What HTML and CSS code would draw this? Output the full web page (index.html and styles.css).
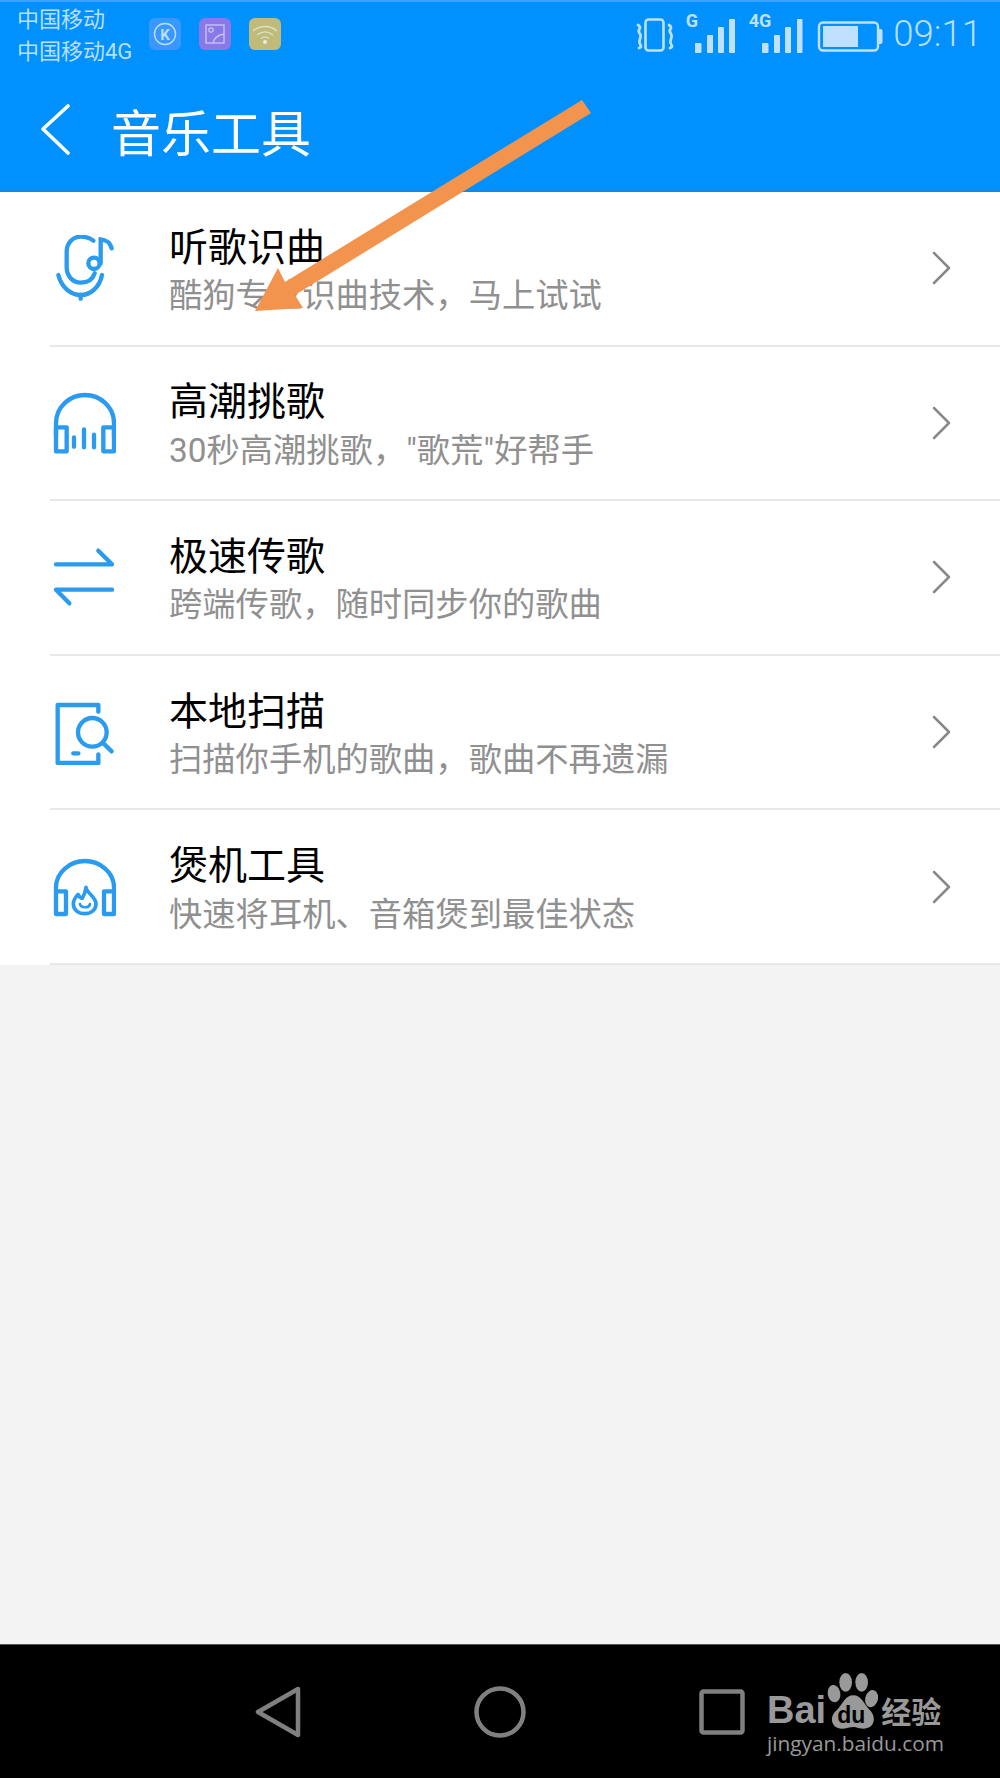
FILE: index.html
```html
<!DOCTYPE html>
<html lang="zh-CN">
<head>
  <meta charset="UTF-8">
  <title>音乐工具</title>
  <link rel="stylesheet" href="styles.css">
</head>
<body>

  <div class="phone">
    <div class="header">
      <div class="statusbar">
        <div class="carrier">
          <div>中国移动</div>
          <div>中国移动4G</div>
        </div>
        <div class="notify">
          <svg class="notify-icon" viewBox="0 0 32 32"><rect width="32" height="32" rx="6" fill="#3a97ff"/><circle cx="16" cy="16" r="10.5" fill="none" stroke="#b9dfff" stroke-width="1.4"/><text x="16" y="21.5" text-anchor="middle" class="k">K</text></svg>
          <svg class="notify-icon" viewBox="0 0 32 32"><rect width="32" height="32" rx="6" fill="#8878e8"/><rect x="7" y="7" width="18" height="18" fill="none" stroke="#c8c8f5" stroke-width="1.3"/><circle cx="12" cy="12" r="2.2" fill="none" stroke="#c8c8f5" stroke-width="1.2"/><path d="M14 25c1-5 5-8 11-9" fill="none" stroke="#c8c8f5" stroke-width="1.3"/></svg>
          <svg class="notify-icon" viewBox="0 0 32 32"><rect width="32" height="32" rx="6" fill="#c0bb78"/><g fill="none" stroke="#d6e4c8" stroke-width="1.3"><path d="M4 13c7-6 17-6 24 0"/><path d="M8 17c5-4 11-4 16 0"/><path d="M12 20.5c2.500-2 5.500-2 8 0"/></g><circle cx="16" cy="24" r="2" fill="#e6efe0"/></svg>
        </div>
        <div class="status-right">
          <svg class="status-icons" width="248" height="54" viewBox="0 0 248 54">
            <g fill="none" stroke="#bfe1ff" stroke-linecap="round">
              <rect x="9.500" y="17.500" width="18" height="31" rx="3" stroke-width="2.600"/>
              <path d="M2 23q3 2 1.500 4t0 4 1 4-1 4 1 4 -1.500 3" stroke-width="2.800"/>
              <path d="M33 23q3 2 1.500 4t0 4 1 4-1 4 1 4 -1.500 3" stroke-width="2.800"/>
              <rect x="183" y="20.500" width="59" height="28" rx="4" stroke-width="2.400"/>
            </g>
            <g fill="#bfe1ff">
              <rect x="187" y="24" width="35" height="21"/>
              <path d="M243 27h1.500q2 0 2 2v11q0 2-2 2H243z"/>
              <text x="56" y="25" class="net" text-anchor="middle">G</text>
              <rect x="59" y="41" width="6.500" height="10" rx="1"/>
              <rect x="71" y="33" width="6" height="18" rx="1"/>
              <rect x="82" y="25" width="6" height="26" rx="1"/>
              <rect x="93" y="17" width="6" height="34" rx="1"/>
              <text x="124" y="25" class="net" text-anchor="middle">4G</text>
              <rect x="126" y="41" width="6.500" height="10" rx="1"/>
              <rect x="138" y="33" width="6" height="18" rx="1"/>
              <rect x="149" y="25" width="6" height="26" rx="1"/>
              <rect x="161" y="17" width="5.500" height="34" rx="1"/>
            </g>
          </svg>
          <span class="clock">09:11</span>
        </div>
      </div>
      <div class="titlebar">
        <svg class="back" width="30" height="52" viewBox="0 0 30 52"><path d="M27 2 2 25l25 24" fill="none" stroke="#fff" stroke-width="3.600" stroke-linecap="round" stroke-linejoin="round"/></svg>
        <h1>音乐工具</h1>
      </div>
    </div>

    <div class="list">
      <div class="row">
        <svg class="row-icon" viewBox="60 135 198 198">
          <g fill="none" stroke="#2a9bee" stroke-width="13" stroke-linecap="round">
            <path d="M190 152q-15-12-38-12c-24 0-42 20-42 45v47c0 26 18 46 42 46 20 0 36-10 42-28"/>
            <path d="M85 255c10 40 40 60 67 60s56-20 64-60"/>
            <path d="M152 315v11"/>
            <circle cx="192" cy="220" r="17"/>
            <path d="M212 220v-72c16 2 28 7 33 27"/>
          </g>
        </svg>
        <div class="row-text">
          <div class="row-title">听歌识曲</div>
          <div class="row-sub">酷狗专业识曲技术，马上试试</div>
        </div>
        <svg class="chevron" width="20" height="34" viewBox="0 0 20 34"><path d="M2 2l15 15L2 32" fill="none" stroke="#888" stroke-width="2.500" stroke-linecap="round" stroke-linejoin="round"/></svg>
      </div>

      <div class="row">
        <svg class="row-icon" viewBox="60 600 198 198">
          <g fill="none" stroke="#2a9bee" stroke-width="13" stroke-linecap="round" stroke-linejoin="round">
            <path d="M78 740v-40c0-50 42-85 87-85s87 35 87 85v40"/>
            <rect x="78" y="712" width="32" height="72"/>
            <rect x="220" y="712" width="32" height="72"/>
            <path d="M132 742v28M162 718v54M192 734v38"/>
          </g>
        </svg>
        <div class="row-text">
          <div class="row-title">高潮挑歌</div>
          <div class="row-sub">30秒高潮挑歌，"歌荒"好帮手</div>
        </div>
        <svg class="chevron" width="20" height="34" viewBox="0 0 20 34"><path d="M2 2l15 15L2 32" fill="none" stroke="#888" stroke-width="2.500" stroke-linecap="round" stroke-linejoin="round"/></svg>
      </div>

      <div class="row">
        <svg class="row-icon" viewBox="60 70 198 198">
          <g fill="none" stroke="#2a9bee" stroke-width="13" stroke-linecap="round" stroke-linejoin="round">
            <path d="M78 131h168l-41-41"/>
            <path d="M246 207H78l40 41"/>
          </g>
        </svg>
        <div class="row-text">
          <div class="row-title">极速传歌</div>
          <div class="row-sub">跨端传歌，随时同步你的歌曲</div>
        </div>
        <svg class="chevron" width="20" height="34" viewBox="0 0 20 34"><path d="M2 2l15 15L2 32" fill="none" stroke="#888" stroke-width="2.500" stroke-linecap="round" stroke-linejoin="round"/></svg>
      </div>

      <div class="row">
        <svg class="row-icon" viewBox="60 530 198 198">
          <g fill="none" stroke="#2a9bee" stroke-width="13" stroke-linecap="round" stroke-linejoin="round">
            <path d="M205 568v-20H83v174h122v-26"/>
            <circle cx="187" cy="630" r="43"/>
            <path d="M221 664l24 23"/>
            <path d="M130 693h15"/>
          </g>
        </svg>
        <div class="row-text">
          <div class="row-title">本地扫描</div>
          <div class="row-sub">扫描你手机的歌曲，歌曲不再遗漏</div>
        </div>
        <svg class="chevron" width="20" height="34" viewBox="0 0 20 34"><path d="M2 2l15 15L2 32" fill="none" stroke="#888" stroke-width="2.500" stroke-linecap="round" stroke-linejoin="round"/></svg>
      </div>

      <div class="row">
        <svg class="row-icon" viewBox="60 190 198 198">
          <g fill="none" stroke="#2a9bee" stroke-width="13" stroke-linecap="round" stroke-linejoin="round">
            <path d="M78 300v-10c0-45 42-79 87-79s87 34 87 79v10"/>
            <rect x="78" y="302" width="30" height="68"/>
            <rect x="222" y="302" width="30" height="68"/>
            <path d="M168 290c2 18 30 28 30 50 0 18-16 29-34 29s-34-11-34-29c0-14 8-22 14-29 4 8 8 11 12 12 6-8 10-20 12-33z" stroke-width="11"/>
            <path d="M150 340c2 12 28 14 30 0" stroke-width="8"/>
          </g>
        </svg>
        <div class="row-text">
          <div class="row-title">煲机工具</div>
          <div class="row-sub">快速将耳机、音箱煲到最佳状态</div>
        </div>
        <svg class="chevron" width="20" height="34" viewBox="0 0 20 34"><path d="M2 2l15 15L2 32" fill="none" stroke="#888" stroke-width="2.500" stroke-linecap="round" stroke-linejoin="round"/></svg>
      </div>
    </div>

    <div class="empty"></div>

    <div class="navbar">
      <svg width="46" height="52" viewBox="0 0 46 52"><path d="M43 3 3 26l40 23z" fill="none" stroke="#808080" stroke-width="4.500" stroke-linejoin="round"/></svg>
      <svg width="52" height="52" viewBox="0 0 52 52"><circle cx="26" cy="26" r="23.500" fill="none" stroke="#808080" stroke-width="4.500"/></svg>
      <svg width="46" height="46" viewBox="0 0 46 46"><rect x="2.500" y="2.500" width="41" height="41" rx="2" fill="none" stroke="#808080" stroke-width="4.500"/></svg>
    </div>

    <!-- 水印 -->
    <div class="watermark">
      <div class="wm-top">
        <span class="wm-bai">Bai</span>
        <span class="wm-paw">
          <svg width="53.300" height="58.300" viewBox="260 35 160 175">
            <g fill="#999">
              <ellipse cx="287" cy="100" rx="19" ry="26" transform="rotate(-10 287 100)"/>
              <ellipse cx="322" cy="66" rx="19" ry="28"/>
              <ellipse cx="370" cy="66" rx="19" ry="28"/>
              <ellipse cx="400" cy="115" rx="19" ry="26" transform="rotate(15 400 115)"/>
              <path d="M345 105C370 105 375 130 395 150 415 170 410 205 375 205 360 205 355 200 345 200 335 200 325 205 310 205 280 205 270 170 295 150 315 130 320 105 345 105z"/>
            </g>
          </svg>
          <span class="wm-du">du</span>
        </span>
        <span class="wm-jy">经验</span>
      </div>
      <div class="wm-url">jingyan.baidu.com</div>
    </div>

    <!-- 箭头标注 -->
    <svg class="arrow" width="1000" height="400" viewBox="0 0 1000 400"><path d="M582 100 591 113 295 295 303 308 255 311 278 268 285 282z" fill="#f2944d"/></svg>
  </div>

</body>
</html>
```

FILE: styles.css
```css
* { box-sizing: border-box; }
body {
  margin: 0;
  font-family: "Noto Sans CJK SC", "Liberation Sans", sans-serif;
  background-color: #f3f3f3;
}

.phone {
  position: relative;
  width: 1000px;
  height: 1778px;
  display: flex;
  flex-direction: column;
  overflow: hidden;
}

.header {
  height: 192px;
  background-color: #0091ff;
  border-top: 2px solid #3aa3ff;
  border-bottom: 2px solid #1a86de;
}

.statusbar {
  height: 68px;
  display: flex;
  padding-left: 17px;
  color: #b9dfff;
}

.carrier {
  width: 132px;
  padding-top: 2px;
  font-size: 22px;
  line-height: 32px;
  white-space: nowrap;
  font-family: Roboto, "Noto Sans CJK SC", sans-serif;
}

.notify {
  display: flex;
  gap: 18px;
  padding-top: 16px;
}
.notify-icon { width: 32px; height: 32px; }
.k { font: bold 15px Roboto, sans-serif; fill: #b9dfff; }

.status-right {
  margin-left: auto;
  display: flex;
  align-items: flex-start;
  padding-right: 18px;
}
.status-icons { margin-right: 9.500px; }
.net { font: bold 18px Roboto, sans-serif; }
.clock {
  font-family: Roboto, sans-serif;
  font-weight: 300;
  font-size: 36.500px;
  line-height: 64px;
}

.titlebar {
  height: 120px;
  display: flex;
  align-items: center;
  padding-left: 41px;
  color: white;
}
.titlebar h1 {
  margin: 0 0 0 40px;
  font-size: 50px;
  font-weight: 400;
  line-height: 60px;
}

.list { background-color: white; }

.row {
  position: relative;
  height: 154.600px;
  margin-left: 50px;
  padding-right: 48px;
  display: flex;
  align-items: center;
  border-bottom: 2px solid #e8e8e8;
}
.row-icon {
  width: 66px;
  height: 66px;
  flex-shrink: 0;
}
.row-text {
  flex: 1;
  margin-left: 53px;
  padding-top: 3.500px;
}
.row-title {
  font-size: 39px;
  line-height: 46px;
  color: black;
}
.row-sub {
  margin-top: 6.500px;
  font-size: 33.300px;
  line-height: 46px;
  color: #909090;
  font-family: Roboto, "Noto Sans CJK SC", sans-serif;
}

.empty { flex: 1; }

.navbar {
  height: 134px;
  background-color: black;
  border-top: 1px solid #555;
  display: flex;
  align-items: center;
  padding-left: 255px;
  gap: 173px;
}

/* watermark and arrow sit over the rest */
.watermark {
  position: absolute;
  left: 767px;
  top: 1672px;
  width: 180px;
  color: #999;
}
.wm-top {
  display: flex;
  align-items: flex-end;
  height: 58px;
}
.wm-bai {
  font: bold 38px/38px "Liberation Sans", sans-serif;
  margin-bottom: 1px;
}
.wm-paw {
  position: relative;
  width: 53px;
  height: 58px;
  margin-left: -1px;
}
.wm-paw svg { display: block; }
.wm-du {
  position: absolute;
  left: 12px;
  bottom: 3px;
  font: bold 23px/23px "Liberation Sans", sans-serif;
  color: black;
}
.wm-jy {
  margin-left: 3px;
  font-size: 30px;
  line-height: 40px;
  font-weight: 700;
}
.wm-url {
  font: 20.800px/26px "Open Sans", sans-serif;
  white-space: nowrap;
}

.arrow {
  position: absolute;
  left: 0;
  top: 0;
}
.back { flex-shrink: 0; }
```
